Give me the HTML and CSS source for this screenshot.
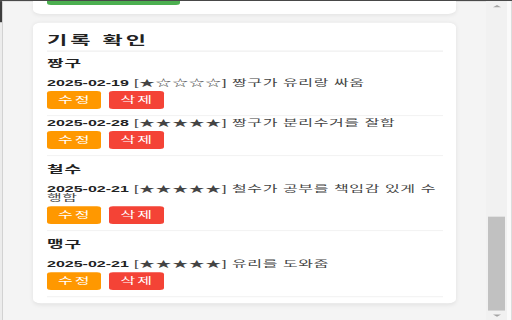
FILE: index.html
```html
<!DOCTYPE html>
<html lang="ko">
<head>
    <meta charset="UTF-8">
    <meta name="viewport" content="width=device-width, initial-scale=1.0">
    <title>기록 확인</title>
    <link rel="stylesheet" href="styles.css">
</head>
<body>
    <div class="screen">
        <div class="edge"><div class="edge-top"></div></div>

        <div class="page">
            <div class="card card-top">
                <div class="save-bar"></div>
            </div>

            <div class="card">
                <h2>기록 확인</h2>

                <h3>짱구</h3>
                <div class="entry">
                    <p class="entry-text"><strong>2025-02-19</strong> [★☆☆☆☆] 짱구가 유리랑 싸움</p>
                    <div class="actions">
                        <button class="btn-edit">수정</button>
                        <button class="btn-delete">삭제</button>
                    </div>
                </div>
                <div class="entry">
                    <p class="entry-text"><strong>2025-02-28</strong> [★★★★★] 짱구가 분리수거를 잘함</p>
                    <div class="actions">
                        <button class="btn-edit">수정</button>
                        <button class="btn-delete">삭제</button>
                    </div>
                </div>

                <h3>철수</h3>
                <div class="entry">
                    <p class="entry-text"><strong>2025-02-21</strong> [★★★★★] 철수가 공부를 책임감 있게 수행함</p>
                    <div class="actions">
                        <button class="btn-edit">수정</button>
                        <button class="btn-delete">삭제</button>
                    </div>
                </div>

                <h3>맹구</h3>
                <div class="entry">
                    <p class="entry-text"><strong>2025-02-21</strong> [★★★★★] 유리를 도와줌</p>
                    <div class="actions">
                        <button class="btn-edit">수정</button>
                        <button class="btn-delete">삭제</button>
                    </div>
                </div>
            </div>
        </div>

        <div class="scrollbar">
            <div class="arrow arrow-up"></div>
            <div class="track"><div class="thumb"></div></div>
            <div class="arrow arrow-down"></div>
        </div>
        <div class="rim"></div>
    </div>
</body>
</html>
```

FILE: styles.css
```css
* {
    margin: 0;
    padding: 0;
    box-sizing: border-box;
}

html, body {
    width: 512px;
    height: 320px;
    overflow: hidden;
}

body {
    font-family: "Liberation Sans", "Noto Sans CJK KR", sans-serif;
    background: #f4f4f4;
    color: #333;
}

/* the capture is squeezed vertically, so the page is drawn tall and pressed down */
.screen {
    display: flex;
    width: 512px;
    height: 576px;
    border-top: 2px solid #4a4a4a;
    transform: scaleY(0.5556);
    transform-origin: top left;
}

.edge {
    width: 3px;
    background: #ececec;
    border-right: 1px solid #d2d2d2;
}

.edge-top {
    height: 38px;
    background: #3d3d3d;
}

.page {
    flex: 1;
    padding: 0 30px;
}

.card {
    background: #fff;
    border-radius: 8px;
    box-shadow: 0 2px 6px rgba(0, 0, 0, 0.08);
    padding: 20px 13px 11px 14px;
    margin-top: 16px;
}

.card-top {
    margin-top: 0;
    border-radius: 0 0 8px 8px;
    padding: 0 14px 16px;
}

.save-bar {
    width: 133px;
    height: 7px;
    background: #4caf50;
    border-radius: 0 0 4px 4px;
}

h2 {
    font-size: 22px;
    line-height: 26px;
    font-weight: 700;
    letter-spacing: 3px;
    color: #222;
    padding-bottom: 4px;
    border-bottom: 2px solid #eee;
}

h3 {
    font-size: 18px;
    line-height: 22px;
    font-weight: 700;
    letter-spacing: 1px;
    color: #222;
    margin: 14px 0 15px;
}

h2 + h3 {
    margin-top: 11px;
}

.entry {
    padding-bottom: 11px;
    border-bottom: 2px solid #f3f3f3;
}

.entry + .entry {
    padding-top: 4px;
}

.entry-text {
    font-size: 16px;
    line-height: 16px;
    letter-spacing: 0.6px;
    color: #444;
}

.entry-text strong {
    color: #222;
    letter-spacing: 0;
}

.actions {
    display: flex;
    gap: 8px;
    margin-top: 7px;
}

.actions button {
    font-family: inherit;
    font-size: 16px;
    line-height: 18px;
    letter-spacing: 2px;
    padding: 7px 10px 7px 11px;
    border: none;
    border-radius: 4px;
    color: #fff;
    cursor: pointer;
}

.btn-edit {
    background: #ff9800;
}

.btn-delete {
    background: #f44336;
}

.scrollbar {
    width: 21px;
    display: flex;
    flex-direction: column;
    background: #f1f1f1;
}

.arrow {
    height: 17px;
    display: flex;
    justify-content: center;
    align-items: center;
}

.arrow::before {
    content: "";
    border-left: 4px solid transparent;
    border-right: 4px solid transparent;
}

.arrow-up::before {
    border-bottom: 4px solid #a3a3a3;
}

.arrow-down::before {
    border-top: 4px solid #a3a3a3;
}

.track {
    flex: 1;
    display: flex;
    flex-direction: column;
    justify-content: flex-end;
    padding: 0 2px;
}

.thumb {
    height: 169px;
    background: #c1c1c1;
}

.rim {
    width: 5px;
    background: #fafafa;
    border-right: 1px solid #dcdcdc;
}
```
